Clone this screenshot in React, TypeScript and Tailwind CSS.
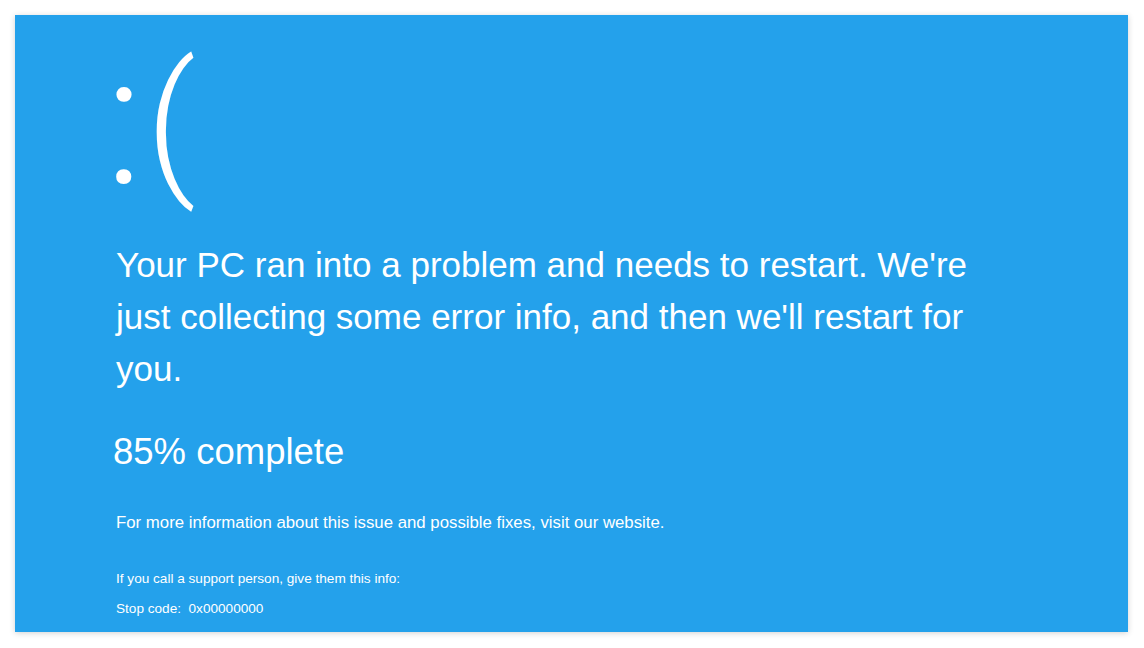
const App = () => {
  return (
    <div className="min-h-screen w-full bg-white pt-[15px] pl-[15px]">
      <div
        className="w-[1113px] h-[617px] bg-[#24a1eb] shadow-[0_1px_6px_rgba(0,0,0,0.18)] pl-[101px] pt-[30px] text-white overflow-hidden"
        style={{ fontFamily: '"Liberation Sans", Arial, sans-serif' }}
      >
        <div className="flex items-start h-[194px] leading-none">
          <span className="text-[181px] font-light font-['Roboto',sans-serif] -ml-[11px] -mt-[14px]">:</span>
          <span className="text-[156px] font-light font-['Roboto',sans-serif] ml-[3px]">(</span>
        </div>
        <p className="text-[35px] leading-[52px] w-[870px]">
          Your PC ran into a problem and needs to restart. We're just collecting some error info, and then we'll restart for you.
        </p>
        <p className="text-[36.5px] leading-[52px] mt-[31px] -ml-[3px]">85% complete</p>
        <p className="text-[16.8px] leading-[20px] mt-[35px]">
          For more information about this issue and possible fixes, visit our website.
        </p>
        <p className="text-[13.6px] leading-[16px] mt-[38px]">If you call a support person, give them this info:</p>
        <p className="text-[13.6px] leading-[16px] mt-[14px]">Stop code:&nbsp; 0x00000000</p>
      </div>
    </div>
  );
};

export default App;
